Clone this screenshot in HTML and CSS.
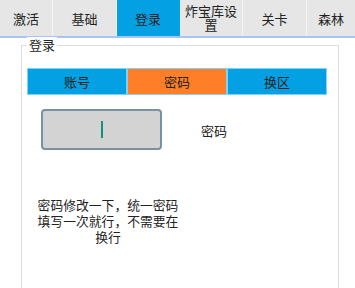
FILE: index.html
```html
<!DOCTYPE html>
<html>
<head>
<meta charset="utf-8">
<link rel="stylesheet" href="styles.css">
</head>
<body>
<div class="tabs">
  <div class="tab w53">激活</div>
  <div class="tab w64">基础</div>
  <div class="tab w63 active">登录</div>
  <div class="tab w63 two">炸宝库设<br>置</div>
  <div class="tab w64">关卡</div>
  <div class="tab grow">森林</div>
</div>
<div class="group">
  <span class="legend">登录</span>
  <div class="btns">
    <div class="btn blue">账号</div>
    <div class="btn orange">密码</div>
    <div class="btn blue">换区</div>
  </div>
  <div class="row">
    <div class="input"><span class="caret"></span></div>
    <div class="label">密码</div>
  </div>
  <p class="note">密码修改一下，统一密码填写一次就行，不需要在换行</p>
</div>
</body>
</html>
```
FILE: styles.css
```css
* { box-sizing: border-box; }
html, body { margin: 0; padding: 0; background: #fff; }
body {
  font-family: "Noto Sans CJK SC", "Noto Sans", sans-serif;
  font-size: 13px;
  color: #222;
  width: 355px;
  height: 288px;
  overflow: hidden;
}
.tabs {
  display: flex;
  height: 38px;
  background: #e6e6e6;
  border-bottom: 2px solid #a8c4f6;
}
.tab {
  display: flex;
  align-items: center;
  justify-content: center;
  text-align: center;
  border-right: 1px solid #f4f4f4;
  line-height: 15px;
  flex: none;
}
.w53 { width: 53px; }
.w64 { width: 64px; }
.w63 { width: 63px; }
.grow { flex: 1; border-right: none; }
.tab.active { background: #03a0e3; color: #222; border-right-color: #03a0e3; }
.tab.two { padding-bottom: 1px; line-height: 14px; }
.group {
  position: relative;
  margin: 7px 0 0 21px;
  width: 318px;
  height: 243px;
  border: 1px solid #dedede;
  border-bottom: none;
  padding: 22px 0 0 5px;
}
.legend {
  position: absolute;
  top: -9px;
  left: 5px;
  padding: 0 2px;
  background: #fff;
  line-height: 16px;
}
.btns {
  display: flex;
  width: 300px;
  height: 27px;
}
.btn {
  flex: 1;
  display: flex;
  align-items: center;
  justify-content: center;
  border: 1px solid #7fd4f5;
}
.blue { background: #03a0e3; }
.orange { background: #fe7f28; }
.row {
  display: flex;
  align-items: center;
  margin-top: 14px;
  padding-left: 14px;
}
.input {
  width: 121px;
  height: 41px;
  border: 2px solid #7891a5;
  border-radius: 4px;
  background: #d3d3d3;
  display: flex;
  align-items: center;
  justify-content: center;
}
.caret {
  display: block;
  width: 2px;
  height: 17px;
  background: #17907a;
}
.label {
  margin-left: 39px;
  padding-top: 2px;
}
.note {
  margin: 47px 0 0 9px;
  width: 144px;
  font-size: 12.8px;
  text-align: center;
  line-height: 16px;
}
```
